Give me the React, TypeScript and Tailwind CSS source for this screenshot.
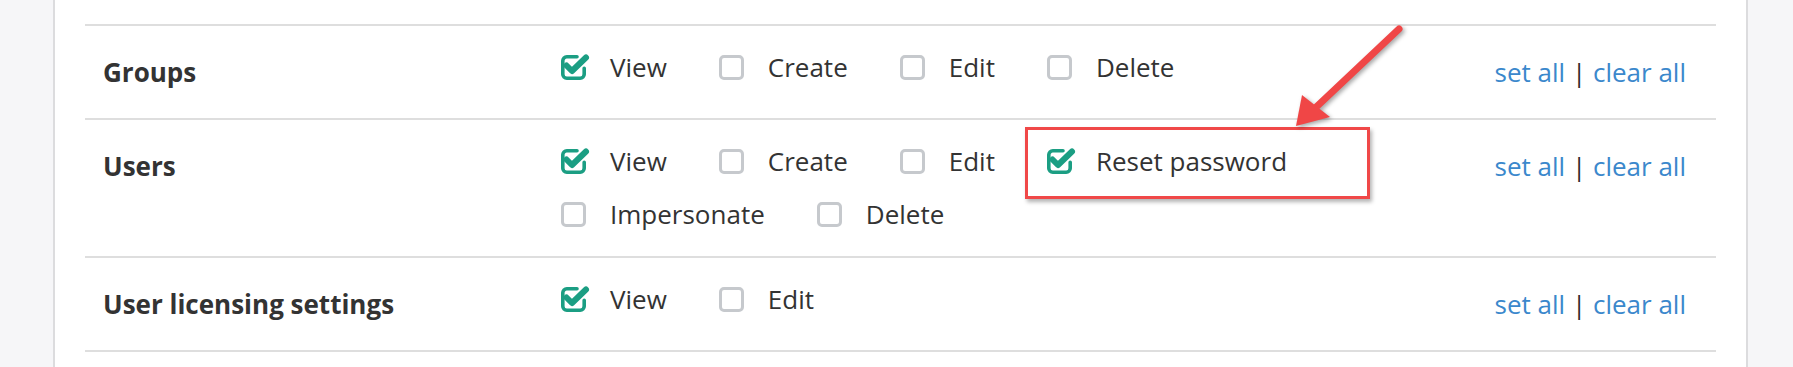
import React from 'react';

type Perm = { label: string; checked?: boolean; highlight?: boolean };

type Section = { name: string; perms: Perm[] };

const sections: Section[] = [
  {
    name: 'Groups',
    perms: [{ label: 'View', checked: true }, { label: 'Create' }, { label: 'Edit' }, { label: 'Delete' }],
  },
  {
    name: 'Users',
    perms: [
      { label: 'View', checked: true },
      { label: 'Create' },
      { label: 'Edit' },
      { label: 'Reset password', checked: true, highlight: true },
      { label: 'Impersonate' },
      { label: 'Delete' },
    ],
  },
  {
    name: 'User licensing settings',
    perms: [{ label: 'View', checked: true }, { label: 'Edit' }],
  },
];

// looks like the old font-awesome check-square-o
function CheckedBox() {
  return (
    <svg width="25" height="25" viewBox="0 0 25 25" overflow="visible" aria-hidden="true">
      <path
        d="M16 1.8H5.8a4 4 0 0 0-4 4v13.4a4 4 0 0 0 4 4h13.4a4 4 0 0 0 4-4v-6"
        fill="none"
        stroke="#1b9e83"
        strokeWidth="3.6"
        strokeLinecap="round"
      />
      <path
        d="M5.5 10.5l5.5 5.5L25 2.5"
        fill="none"
        stroke="#1b9e83"
        strokeWidth="6"
        strokeLinecap="round"
        strokeLinejoin="round"
      />
    </svg>
  );
}

function PermItem({ perm }: { perm: Perm }) {
  return (
    <label className="relative flex h-[53px] items-center">
      {perm.checked ? (
        <CheckedBox />
      ) : (
        <span className="h-[25px] w-[25px] rounded-[5px] border-[3px] border-[#c6c9cd]" />
      )}
      <span className="ml-[24px] text-[26px] text-[#333]">{perm.label}</span>
      {perm.highlight && (
        <span className="pointer-events-none absolute left-[-22px] top-[-8px] h-[72px] w-[345px] border-[3px] border-[#f04848] shadow-[2px_3px_4px_rgba(0,0,0,0.3)]" />
      )}
    </label>
  );
}

export default function App() {
  return (
    <div className="relative flex h-[367px] w-[1793px] overflow-hidden bg-[#f6f6f8] font-['Open_Sans',sans-serif]">
      <div className="ml-[53px] w-[1695px] border-x-2 border-[#dcdcde] bg-white px-[30px] pt-[24px]">
        {sections.map((s, i) => (
          <div
            key={s.name}
            className={`flex border-t-2 border-[#dedede] ${i === sections.length - 1 ? 'border-b-2' : ''}`}
          >
            <div className="w-[476px] shrink-0 pb-[19px] pl-[18px] pt-[20px] text-[26px] font-bold leading-[53px] text-[#333]">
              {s.name}
            </div>
            <div className="flex w-[860px] shrink-0 flex-wrap gap-x-[52px] py-[15px]">
              {s.perms.map((p) => (
                <PermItem key={p.label} perm={p} />
              ))}
            </div>
            <div className="flex-1 pb-[19px] pr-[30px] pt-[20px] text-right text-[26px] leading-[53px] text-[#3b88cc]">
              <a href="#">set all</a>
              <span className="text-[#2e2e2e]"> | </span>
              <a href="#">clear all</a>
            </div>
          </div>
        ))}
      </div>

      {/* annotation arrow */}
      <svg
        className="pointer-events-none absolute left-0 top-0 drop-shadow-[2px_2px_2px_rgba(0,0,0,0.35)]"
        width="1793"
        height="367"
        viewBox="0 0 1793 367"
      >
        <line x1="1399" y1="29" x2="1312" y2="111" stroke="#f04646" strokeWidth="7" strokeLinecap="round" />
        <polygon points="1296,126 1302,95 1330,117" fill="#f04646" />
      </svg>
    </div>
  );
}
